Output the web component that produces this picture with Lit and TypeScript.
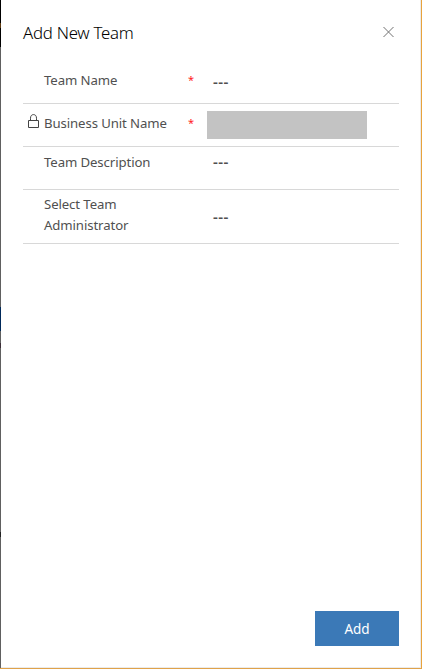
import { LitElement, html, css, svg, nothing } from "lit";
import { customElement } from "lit/decorators.js";
import { classMap } from "lit/directives/class-map.js";

interface Field {
  label: string;
  kind: string;
  required?: boolean;
  locked?: boolean;
}

const fields: Field[] = [
  { label: "Team Name", kind: "name", required: true },
  { label: "Business Unit Name", kind: "unit", required: true, locked: true },
  { label: "Team Description", kind: "description" },
  { label: "Select Team Administrator", kind: "admin" },
];

const lockShape = svg`
  <path d="M.5 6.5h10v7h-10z" />
  <path d="M2.5 6.5V4.2C2.5 1.9 3.7.6 5.5.6s3 1.3 3 3.6v2.3" />`;

@customElement("app-root")
export class AppRoot extends LitElement {
  static styles = css`
    :host {
      display: block;
      height: 100vh;
      font-family: "Noto Sans", "Open Sans", sans-serif;
      color: #505050;
    }
    * {
      box-sizing: border-box;
    }
    .shell {
      display: grid;
      grid-template-columns: 1px 1fr;
      height: 100%;
      background: #fff;
      border-right: 1px solid #e8a33d;
      border-bottom: 1px solid #e0a24a;
    }
    .edge {
      background: linear-gradient(
        #000 0 23px, #5c3a10 23px 28px, #000 28px 47px, #606060 47px 307px,
        #00295a 307px 331px, #606060 331px 343px, #3c2f38 343px 348px,
        #606060 348px 532px, #222 532px 537px, #606060 537px
      );
    }
    .panel {
      display: flex;
      flex-direction: column;
      padding: 22px 21px 21px 22px;
      border-right: 1px solid #ebebeb;
      border-bottom: 1px solid #ebebeb;
    }
    header {
      display: flex;
      justify-content: space-between;
      height: 39px;
    }
    h1 {
      margin: 0;
      font-size: 16.8px;
      font-weight: 300;
      letter-spacing: -0.25px;
      line-height: 21px;
      color: #000;
    }
    .close {
      width: 11px;
      height: 12px;
      margin: 4px 5px 0 0;
      stroke: #707070;
      fill: none;
    }
    .row {
      display: grid;
      grid-template-columns: 21px 144px 19px 1fr;
      height: 43px;
      padding-top: 9px;
      border-bottom: 1px solid #d8d8d8;
      font-size: 13.2px;
      letter-spacing: -0.1px;
      line-height: 21px;
    }
    .description {
      padding-top: 5px;
    }
    .admin {
      height: 54px;
      padding-top: 4px;
    }
    .label {
      max-width: 130px;
    }
    .lock {
      display: block;
      width: 11px;
      height: 14px;
      margin: 1px 0 0 5px;
      stroke: #444;
      fill: none;
    }
    .star {
      color: #f22;
      font-size: 11px;
      line-height: 20px;
    }
    .value {
      padding: 1px 0 0 6px;
      font-size: 15px;
      font-weight: 600;
      letter-spacing: 0.5px;
      color: #505050;
    }
    .description .value {
      padding-top: 0;
      line-height: 19px;
    }
    .admin .value {
      padding-top: 13px;
      line-height: 19px;
    }
    .masked {
      width: 160px;
      height: 28px;
      margin-top: -2px;
      background: #c3c3c3;
    }
    button {
      width: 84px;
      height: 35px;
      margin: auto 0 0 auto;
      padding: 1px 0 0;
      border: 0;
      background: #3b79b7;
      color: #fff;
      font: 13.5px/34px "Noto Sans", sans-serif;
    }
  `;

  private renderField(f: Field) {
    return html`<div class=${classMap({ row: true, [f.kind]: true })}>
      <span>${f.locked
        ? html`<svg class="lock" viewBox="0 0 11 14">${lockShape}</svg>`
        : nothing}</span>
      <span class="label">${f.label}</span>
      <span class="star">${f.required ? "*" : nothing}</span>
      ${f.locked
        ? html`<div class="masked"></div>`
        : html`<span class="value">---</span>`}
    </div>`;
  }

  render() {
    return html`<div class="shell">
      <div class="edge"></div>
      <section class="panel">
        <header>
          <h1>Add New Team</h1>
          <svg class="close" viewBox="0 0 11 12"><path d="M.5 1l10 10M10.5 1L.5 11" /></svg>
        </header>
        ${fields.map((f) => this.renderField(f))}
        <button>Add</button>
      </section>
    </div>`;
  }
}
